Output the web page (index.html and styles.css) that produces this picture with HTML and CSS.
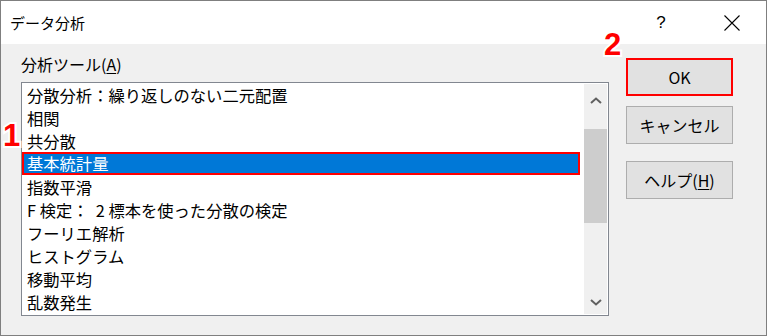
FILE: index.html
```html
<!DOCTYPE html>
<html lang="ja">
<head>
    <meta charset="UTF-8">
    <meta name="viewport" content="width=device-width, initial-scale=1.0">
    <title>データ分析</title>
    <link rel="stylesheet" href="styles.css">
</head>
<body>

    <div class="dialog">
        <!-- タイトルバー -->
        <div class="titlebar">
            <span class="title">データ分析</span>
            <span class="caption-help">?</span>
            <span class="caption-close">
                <svg width="16" height="16" viewBox="0 0 16 16">
                    <path d="M0.5 0.5 L15.5 15.5 M15.5 0.5 L0.5 15.5" stroke="#000" stroke-width="1.1" fill="none"/>
                </svg>
            </span>
        </div>

        <div class="dialog-body">
            <!-- 分析ツール一覧 -->
            <div class="tool-pane">
                <div class="tool-label">分析ツール(<u>A</u>)</div>
                <div class="listbox">
                    <ul class="items">
                        <li>分散分析：繰り返しのない二元配置</li>
                        <li>相関</li>
                        <li>共分散</li>
                        <li class="selected">基本統計量</li>
                        <li>指数平滑</li>
                        <li>F 検定：&nbsp; 2 標本を使った分散の検定</li>
                        <li>フーリエ解析</li>
                        <li>ヒストグラム</li>
                        <li>移動平均</li>
                        <li>乱数発生</li>
                    </ul>
                    <div class="scrollbar">
                        <div class="arrow arrow-up">
                            <svg width="12" height="7" viewBox="0 0 12 7">
                                <polyline points="1,6 6,1.5 11,6" stroke="#606060" stroke-width="2" fill="none"/>
                            </svg>
                        </div>
                        <div class="track">
                            <div class="thumb"></div>
                        </div>
                        <div class="arrow arrow-down">
                            <svg width="12" height="7" viewBox="0 0 12 7">
                                <polyline points="1,1 6,5.5 11,1" stroke="#606060" stroke-width="2" fill="none"/>
                            </svg>
                        </div>
                    </div>
                </div>
            </div>

            <!-- ボタン -->
            <div class="buttons">
                <div class="btn btn-ok">OK</div>
                <div class="btn btn-cancel">キャンセル</div>
                <div class="btn">ヘルプ(<u>H</u>)</div>
            </div>
        </div>

        <!-- 手順番号 -->
        <div class="callout callout-1">1</div>
        <div class="callout callout-2">2</div>
    </div>

</body>
</html>
```

FILE: styles.css
```css
/* 全体 */
body {
    margin: 0;
    background-color: #f0f0f0;
    font-family: "Noto Sans CJK JP", "Noto Sans", sans-serif;
    color: #000;
}

.dialog {
    position: relative;
    width: 767px;
    height: 336px;
    box-sizing: border-box;
    border: 1px solid #7f7f7f;
    background-color: #f0f0f0;
    display: flex;
    flex-direction: column;
    overflow: hidden;
}

/* タイトルバー */
.titlebar {
    height: 43px;
    background-color: #fff;
    display: flex;
    align-items: center;
    flex-shrink: 0;
}

.title {
    flex: 1;
    padding-left: 9px;
    font-size: 15px;
}

.caption-help {
    width: 46px;
    text-align: center;
    margin-right: 25px;
    font-family: "Liberation Sans", sans-serif;
    font-size: 17px;
    font-weight: 300;
}

.caption-close {
    width: 46px;
    margin-right: 11px;
    display: flex;
    justify-content: center;
    align-items: center;
}

/* 本体 */
.dialog-body {
    display: flex;
    flex: 1;
}

.tool-pane {
    padding-left: 20px;
}

.tool-label {
    padding-top: 10px;
    height: 20px;
    line-height: 20px;
    font-size: 16px;
    margin-bottom: 8px;
}

.tool-label u,
.btn u {
    text-underline-offset: 2px;
}

/* リストボックス */
.listbox {
    width: 588px;
    height: 234px;
    box-sizing: border-box;
    border: 1px solid #828790;
    background-color: #fff;
    display: flex;
}

.items {
    list-style: none;
    margin: 0;
    padding: 0;
    flex: 1;
}

.items li {
    height: 23px;
    line-height: 23px;
    box-sizing: border-box;
    padding: 1px 0 0 5px;
    font-size: 16.3px;
    white-space: nowrap;
}

.items li.selected {
    background-color: #0078d7;
    color: #fff;
    border: 2px solid #ff0000;
    padding: 0 0 0 3px;
    line-height: 19px;
    margin-right: 1px;
}

/* スクロールバー */
.scrollbar {
    width: 23px;
    margin: 1px 1px 1px 3px;
    background-color: #f0f0f0;
    display: flex;
    flex-direction: column;
}

.arrow {
    display: flex;
    justify-content: center;
    align-items: center;
}

.arrow-up {
    height: 32px;
}

.arrow-down {
    height: 23px;
}

.track {
    flex: 1;
}

.thumb {
    margin-top: 13px;
    height: 94px;
    background-color: #cdcdcd;
}

/* ボタン */
.buttons {
    margin-left: 17px;
    padding-top: 14px;
}

.btn {
    width: 107px;
    height: 38px;
    box-sizing: border-box;
    border: 1px solid #adadad;
    background-color: #e1e1e1;
    display: flex;
    justify-content: center;
    align-items: center;
    font-size: 16px;
}

.btn-ok {
    border: 2px solid #ff0000;
    margin-bottom: 10px;
}

.btn-cancel {
    margin-bottom: 17px;
}

/* 手順番号 */
.callout {
    position: absolute;
    font-family: "Liberation Sans", Arial, sans-serif;
    font-weight: bold;
    font-size: 31px;
    line-height: 30px;
    color: #ff0000;
    -webkit-text-stroke: 4px #fff;
    paint-order: stroke fill;
}

.callout-1 {
    left: 2px;
    top: 120px;
}

.callout-2 {
    left: 603px;
    top: 29px;
}
```
